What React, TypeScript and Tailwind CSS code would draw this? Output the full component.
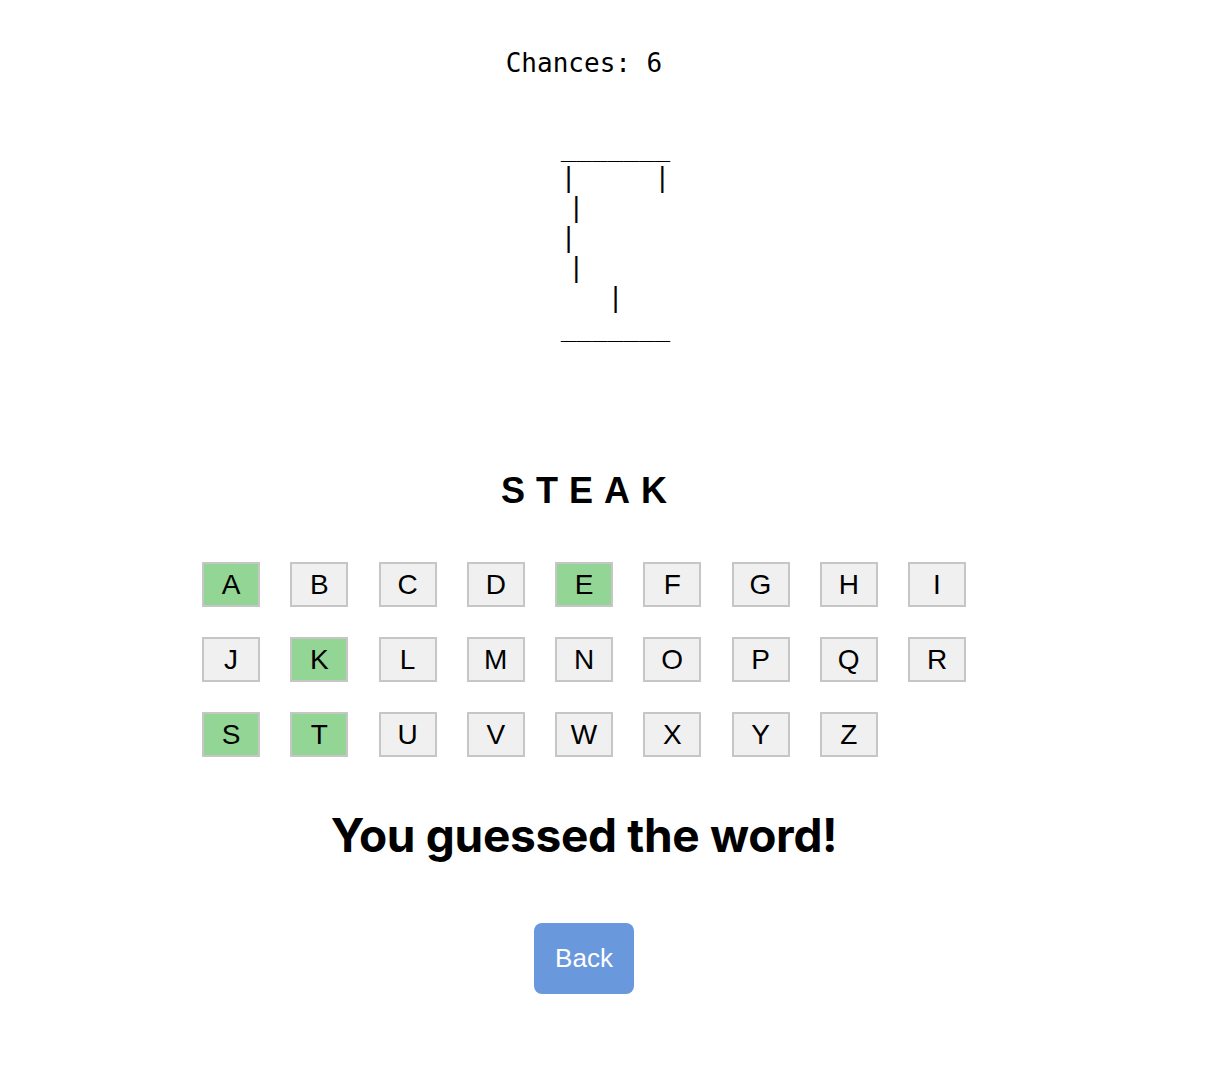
import React from "react";

const LETTERS = "ABCDEFGHIJKLMNOPQRSTUVWXYZ".split("");
const GUESSED = new Set(["A", "E", "K", "S", "T"]);

// each line of the gallows is centred on its own, trailing spaces included
const GALLOWS = ["_______", "|     |", "|     ", "|      ", "|     ", "|", "_______"];

const LetterKey = ({ letter }: { letter: string }) => {
  const hit = GUESSED.has(letter);
  return (
    <button
      className={
        "w-[58px] h-[45px] flex items-center justify-center border-2 border-[#c6c6c6] text-[28px] leading-none text-black font-['Liberation_Sans',Arial,sans-serif] " +
        (hit ? "bg-[#93d594]" : "bg-[#f0f0f0]")
      }
    >
      {letter}
    </button>
  );
};

export default function App() {
  return (
    <div className="w-full min-h-[1078px] bg-white flex flex-col">
      <div className="w-[1168px] flex justify-center mt-[48px]">
        <p className="text-[26px] leading-[30px] text-black font-['DejaVu_Sans_Mono',monospace]">
          Chances: 6
        </p>
      </div>

      <div className="w-full pl-[3px] mt-[54px] flex flex-col items-center">
        {GALLOWS.map((line, i) => (
          <pre
            key={i}
            className="text-[26px] leading-[30px] text-black font-['DejaVu_Sans_Mono',monospace] whitespace-pre"
          >
            {line}
          </pre>
        ))}
      </div>

      <div className="w-[1168px] flex flex-col items-center">
        <h2 className="mt-[128px] text-[36px] leading-[42px] font-bold tracking-[11px] pl-[11px] text-black font-['Liberation_Sans',Arial,sans-serif]">
          STEAK
        </h2>

        <div className="mt-[50px] grid grid-cols-[repeat(9,88.25px)] gap-y-[30px] justify-items-center">
          {LETTERS.map((l) => (
            <LetterKey key={l} letter={l} />
          ))}
        </div>

        <h1 className="mt-[49px] text-[46px] leading-[58px] font-bold tracking-[-0.3px] text-black font-['Inter',sans-serif]">
          You guessed the word!
        </h1>

        <button className="mt-[59px] w-[100px] h-[71px] rounded-lg bg-[#6a98dd] text-white text-[26px] font-['Liberation_Sans',Arial,sans-serif]">
          Back
        </button>
      </div>
    </div>
  );
}
